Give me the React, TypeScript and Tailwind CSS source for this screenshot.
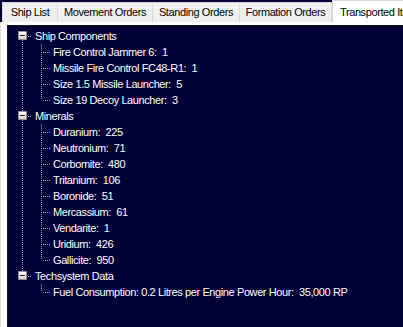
import React from 'react';

type Node = { label: string; children: string[] };

const tree: Node[] = [
    {
        label: 'Ship Components',
        children: [
            'Fire Control Jammer 6:  1',
            'Missile Fire Control FC48-R1:  1',
            'Size 1.5 Missile Launcher:  5',
            'Size 19 Decoy Launcher:  3',
        ],
    },
    {
        label: 'Minerals',
        children: [
            'Duranium:  225',
            'Neutronium:  71',
            'Corbomite:  480',
            'Tritanium:  106',
            'Boronide:  51',
            'Mercassium:  61',
            'Vendarite:  1',
            'Uridium:  426',
            'Gallicite:  950',
        ],
    },
    {
        label: 'Techsystem Data',
        children: ['Fuel Consumption: 0.2 Litres per Engine Power Hour:  35,000 RP'],
    },
];

const tabs = [
    { name: 'Ship List', w: 'w-[56px]' },
    { name: 'Movement Orders', w: 'w-[95px]' },
    { name: 'Standing Orders', w: 'w-[87px]' },
    { name: 'Formation Orders', w: 'w-[92px]' },
];

const LINE = '#a3a3b6';

// one 19px guide cell of the tree
const Guide: React.FC<{ top?: boolean; bottom?: boolean; branch?: boolean; box?: boolean }> = ({ top, bottom, branch, box }) => (
    <svg width="19" height="16" className="shrink-0" shapeRendering="crispEdges">
        {top && <line x1="9.5" y1="0" x2="9.5" y2={box ? 4 : 8} stroke={LINE} strokeDasharray="1 1" />}
        {bottom && <line x1="9.5" y1={box ? 12 : 8} x2="9.5" y2="16" stroke={LINE} strokeDasharray="1 1" />}
        {branch && <line x1={box ? 15 : 11} y1="8.5" x2="19" y2="8.5" stroke={LINE} strokeDasharray="1 1" />}
        {box && (
            <>
                <defs>
                    <linearGradient id="bx" x1="0" y1="0" x2="0" y2="1">
                        <stop offset="0" stopColor="#ffffff" />
                        <stop offset="1" stopColor="#d4d4d4" />
                    </linearGradient>
                </defs>
                <rect x="5.5" y="3.5" width="8" height="8" fill="url(#bx)" stroke="#8f8f8f" />
                <line x1="7" y1="7.5" x2="12" y2="7.5" stroke="#1c1c1c" />
            </>
        )}
    </svg>
);

const App: React.FC = () => {
    return (
        <div
            className="w-[403px] h-[327px] overflow-hidden bg-[#000037] flex flex-col text-[11px] tracking-[-0.4px] text-black"
            style={{ fontFamily: '"Liberation Sans", Arial, sans-serif' }}
        >
            {/* tab strip */}
            <div className="flex items-end h-[22px] pl-[2px] shrink-0">
                {tabs.map((t, i) => (
                    <div
                        key={t.name}
                        className={`${t.w} h-[20px] bg-[#f0f0f0] border-t border-r border-[#d9d9d9] ${i === 0 ? 'border-l' : ''} flex items-center justify-center whitespace-nowrap`}
                    >
                        {t.name}
                    </div>
                ))}
                <div className="flex-1 h-[22px] bg-white border-t border-l border-[#d9d9d9] pl-[7px] pt-[3px] whitespace-nowrap overflow-hidden">
                    Transported Items
                </div>
            </div>

            {/* tab page */}
            <div className="flex-1 flex flex-col bg-white border-l border-[#dcdcdc] pl-[6px] pt-[3px]">
                <div className="flex-1 bg-[#000037] border-l border-t border-[#15152a] pt-[2px] pl-[5px] text-white">
                    {tree.map((node, ni) => {
                        const first = ni === 0;
                        const last = ni === tree.length - 1;
                        return (
                            <div key={node.label}>
                                <div className="flex items-center h-[16px]">
                                    <Guide box branch top={!first} bottom={!last} />
                                    <span className="ml-[3px] whitespace-pre">{node.label}</span>
                                </div>
                                {node.children.map((c, ci) => (
                                    <div key={c} className="flex items-center h-[16px]">
                                        <Guide top={!last} bottom={!last} />
                                        <Guide top branch bottom={ci < node.children.length - 1} />
                                        <span className="ml-[2px] whitespace-pre">{c}</span>
                                    </div>
                                ))}
                            </div>
                        );
                    })}
                </div>
            </div>
        </div>
    );
};

export default App;
